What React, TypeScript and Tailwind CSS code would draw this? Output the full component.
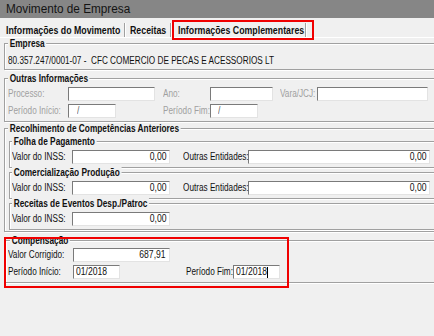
import clsx from 'clsx'
import type { ReactNode } from 'react'

// no narrow face is installed, so the condensed look comes from a horizontal squeeze
function Narrow({ children, right, className }: { children: ReactNode; right?: boolean; className?: string }) {
  return (
    <span className={clsx('inline-block whitespace-nowrap scale-x-[0.82]', right ? 'origin-right' : 'origin-left', className)}>
      {children}
    </span>
  )
}

function Group({ label, className, labelClass, children }: { label: string; className?: string; labelClass?: string; children?: ReactNode }) {
  return (
    <div className={clsx('relative border border-[#a0a0a0] shadow-[inset_1px_1px_0_#fff,1px_1px_0_#fff]', className)}>
      <span
        className={clsx(
          'absolute -top-[6px] inline-block whitespace-nowrap origin-left scale-x-[0.83] bg-[#f0f0f0] px-[2px] text-[10px] leading-[12px] font-bold text-[#111]',
          labelClass ?? 'left-[3px]',
        )}
      >
        {label}
      </span>
      {children}
    </div>
  )
}

function Field({ value, className, right, muted, children }: { value?: string; className?: string; right?: boolean; muted?: boolean; children?: ReactNode }) {
  return (
    <div
      className={clsx(
        'h-[14px] shrink-0 flex items-center bg-white border border-t-[#7a7a7a] border-l-[#7a7a7a] border-r-[#e3e3e3] border-b-[#e3e3e3] text-[10px] leading-[12px]',
        right ? 'justify-end pr-[3px]' : 'pl-[1px]',
        muted ? 'text-[#666]' : 'text-[#111]',
        className,
      )}
    >
      {value && (
        <Narrow right={right} className="scale-x-[0.86]">
          {value}
        </Narrow>
      )}
      {children}
    </div>
  )
}

function Label({ text, className, muted }: { text: string; className?: string; muted?: boolean }) {
  return (
    <span className={clsx('shrink-0 whitespace-nowrap text-[10px] leading-[12px]', muted ? 'text-[#a0a0a0]' : 'text-[#111]', className)}>
      <Narrow>{text}</Narrow>
    </span>
  )
}

function InssGroup({ label, outras, className }: { label: string; outras?: boolean; className?: string }) {
  return (
    <Group label={label} className={clsx('h-[27px] pt-[8px] pl-[2px]', className)} labelClass="left-[2px]">
      <div className="flex items-center">
        <Label text="Valor do INSS:" className="w-[60px]" />
        <Field value="0,00" right className="w-[98px]" />
        {outras && (
          <>
            <Label text="Outras Entidades:" className="ml-[13px] w-[65px]" />
            <Field value="0,00" right className="w-[182px]" />
          </>
        )}
      </div>
    </Group>
  )
}

function Tab({ text, className }: { text: string; className?: string }) {
  return (
    <div className={clsx('pt-[6px] whitespace-nowrap', className)}>
      <span className="inline-block origin-left scale-x-[0.8]">{text}</span>
    </div>
  )
}

function TabSep() {
  return <div className="w-px h-[14px] mt-[5px] bg-[#a0a0a0] shadow-[1px_0_0_#fff]" />
}

export default function App() {
  return (
    <div className="relative w-[434px] h-[336px] overflow-hidden bg-[#f0f0f0] text-black font-['Liberation_Sans',sans-serif]">
      <div className="h-[18px] flex items-center pl-[6px] bg-[#868686] text-[12px] text-[#141414] whitespace-nowrap">
        <span className="inline-block origin-left scale-x-[0.98]">Movimento de Empresa</span>
      </div>

      <div className="h-[20px] flex border-b border-b-white text-[11px] leading-[12px] font-bold text-[#111]">
        <Tab text="Informações do Movimento" className="w-[124px] pl-[6px]" />
        <TabSep />
        <Tab text="Receitas" className="w-[45px] pl-[5px]" />
        <TabSep />
        <Tab text="Informações Complementares" className="w-[134px] pl-[7px]" />
        <TabSep />
      </div>

      <div className="w-[460px] pl-[4px]">
        <Group label="Empresa" className="h-[27px] mt-[5px] pl-[3px] pt-[11px]">
          <div className="text-[10px] leading-[12px] text-[#111]">
            <Narrow className="scale-x-[0.8] whitespace-pre">80.357.247/0001-07 -  CFC COMERCIO DE PECAS E ACESSORIOS LT</Narrow>
          </div>
        </Group>

        <Group label="Outras Informações" className="h-[44px] mt-[8px] pl-[3px] pt-[8px]">
          <div className="flex flex-col gap-[3px]">
            <div className="flex items-center">
              <Label text="Processo:" muted className="w-[60px]" />
              <Field className="w-[87px]" />
              <Label text="Ano:" muted className="ml-[8px] w-[47px]" />
              <Field className="w-[63px]" />
              <Label text="Vara/JCJ:" muted className="ml-[7px] w-[37px]" />
              <Field className="w-[111px]" />
            </div>
            <div className="flex items-center">
              <Label text="Período Início:" muted className="w-[60px]" />
              <Field value="/" muted className="w-[48px] !pl-[8px]" />
              <Label text="Período Fim:" muted className="ml-[47px] w-[47px]" />
              <Field value="/" muted className="w-[48px] !pl-[7px]" />
            </div>
          </div>
        </Group>

        <Group label="Recolhimento de Competências Anteriores" className="h-[104px] mt-[6px] pl-[4px] pt-[12px]">
          <InssGroup label="Folha de Pagamento" outras />
          <InssGroup label="Comercialização Produção" outras className="mt-[4px]" />
          <InssGroup label="Receitas de Eventos Desp./Patroc" className="mt-[4px]" />
        </Group>

        <Group label="Compensação" className="h-[43px] mt-[8px] ml-[1px] pl-[2px] pt-[7px]" labelClass="left-[4px]">
          <div className="flex flex-col gap-[3px]">
            <div className="flex items-center">
              <Label text="Valor Corrigido:" className="w-[65px]" />
              <Field value="687,91" right className="w-[97px]" />
            </div>
            <div className="flex items-center">
              <Label text="Período Início:" className="w-[65px]" />
              <Field value="01/2018" className="w-[47px] !pl-[2px]" />
              <Label text="Período Fim:" className="ml-[66px] w-[47px]" />
              <Field value="01/2018" className="w-[47px] !pl-[2px]">
                <span className="-ml-[5px] w-px h-[11px] bg-black" />
              </Field>
            </div>
          </div>
        </Group>
      </div>

      {/* red highlight marks */}
      <div className="absolute left-[172px] top-[20px] w-[142px] h-[20px] border-2 border-[#f00000]" />
      <div className="absolute left-[4px] top-[237px] w-[285px] h-[51px] border-2 border-[#f00000]" />
    </div>
  )
}
